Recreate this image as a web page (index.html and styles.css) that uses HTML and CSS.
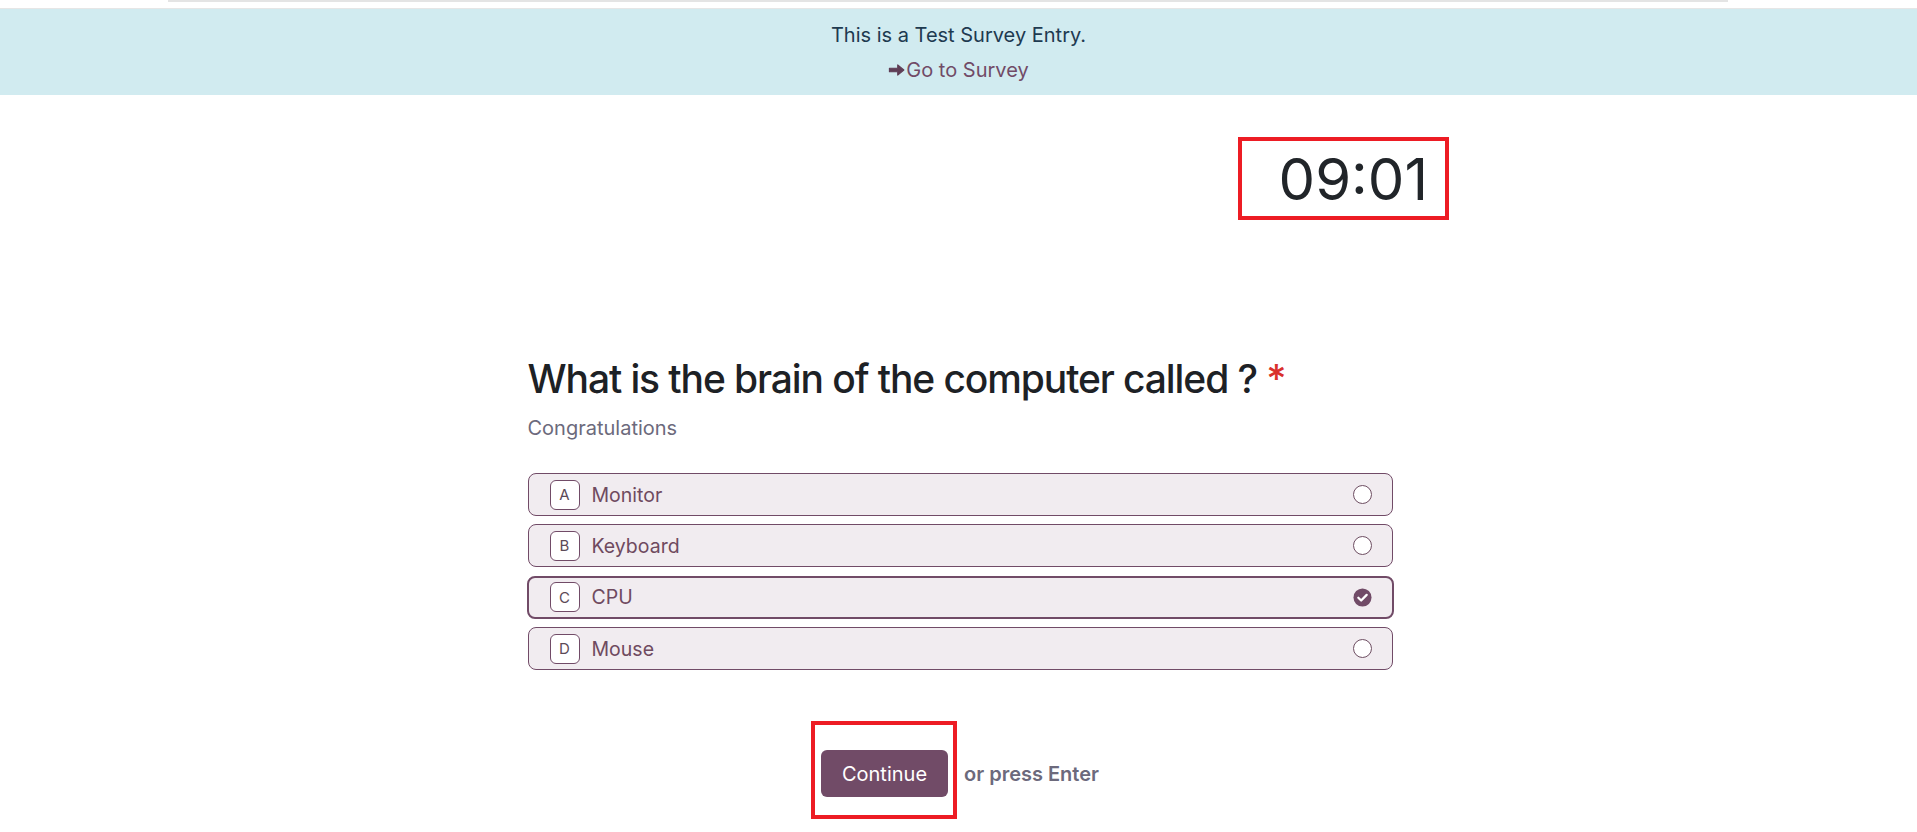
FILE: index.html
```html
<!DOCTYPE html>
<html lang="en">
<head>
  <meta charset="UTF-8" />
  <title>Survey</title>
  <link rel="stylesheet" href="styles.css">
</head>
<body>

  <div class="topline"></div>

  <!-- Test entry banner -->
  <div class="alert">
    <p class="alert-title">This is a Test Survey Entry.</p>
    <a class="alert-link" href="#"><svg class="arrow" viewBox="0 0 18 14" width="17" height="14"><path d="M1.5 5.2h8.8V1.6L16.8 7l-6.5 5.4V8.8H1.5z" fill="currentColor" stroke="currentColor" stroke-width="1.2" stroke-linejoin="round"/></svg>Go to Survey</a>
  </div>

  <!-- Timer -->
  <div class="timer-row">
    <div class="timer">09:01</div>
  </div>

  <!-- Question -->
  <div class="question">
    <h3 class="question-title">What is the brain of the computer called ? <span class="required">*</span></h3>
    <p class="question-desc">Congratulations</p>

    <div class="choices">
      <label class="choice">
        <span class="key">A</span>
        <span class="label">Monitor</span>
        <span class="radio"></span>
      </label>
      <label class="choice">
        <span class="key">B</span>
        <span class="label">Keyboard</span>
        <span class="radio"></span>
      </label>
      <label class="choice selected">
        <span class="key">C</span>
        <span class="label">CPU</span>
        <span class="radio checked"><svg viewBox="0 0 20 20" width="19" height="19"><circle cx="10" cy="10" r="9.5" fill="#714b67"/><path d="M5.6 10.2l3 3 5.8-6" fill="none" stroke="#fff" stroke-width="2.4" stroke-linecap="round" stroke-linejoin="round"/></svg></span>
      </label>
      <label class="choice">
        <span class="key">D</span>
        <span class="label">Mouse</span>
        <span class="radio"></span>
      </label>
    </div>

    <div class="actions">
      <div class="mark">
        <button class="btn-continue">Continue</button>
      </div>
      <span class="hint">or press Enter</span>
    </div>
  </div>

</body>
</html>
```

FILE: styles.css
```css
body {
  margin: 0;
  font-family: Inter, "Noto Sans", sans-serif;
  color: #212529;
  background: #fff;
}
.topline {
  margin-left: 168px;
  width: 1560px;
  height: 2px;
  background: #e4e4e4;
  margin-bottom: 6px;
}
.alert {
  border-top: 1px solid #e6e6e6;
  background: #d1ebf0;
  text-align: center;
  padding: 11px 0 10px;
  font-size: 20px;
}
.alert-title {
  margin: 0 0 5px;
  line-height: 30px;
  color: #1e3a50;
}
.alert-link {
  display: inline-flex;
  align-items: center;
  line-height: 30px;
  color: #714b67;
  text-decoration: none;
}
.arrow {
  color: #5f3e56;
  margin-right: 1px;
}
.timer-row {
  width: 981px;
  margin: 42px auto 0;
  display: flex;
  justify-content: flex-end;
}
.timer {
  box-sizing: border-box;
  width: 211px;
  border: 4px solid #ed1c24;
  padding: 2px 17px 0 0;
  text-align: right;
  font-size: 58px;
  line-height: 73px;
  color: #212529;
}
.question {
  width: 865px;
  margin: 136px auto 0;
  padding-left: 3px;
}
.question-title {
  margin: 0;
  font-size: 39px;
  line-height: 46px;
  font-weight: 500;
  color: #1d2125;
  letter-spacing: -1.1px;
}
.required {
  color: #d9302c;
}
.question-desc {
  margin: 14px 0 0;
  font-size: 20px;
  line-height: 24px;
  color: #6c6a7c;
}
.choices {
  margin-top: 33px;
  display: flex;
  flex-direction: column;
  gap: 8.4px;
}
.choice {
  box-sizing: border-box;
  height: 43px;
  display: flex;
  align-items: center;
  padding: 0 20px 0 21px;
  border: 1px solid #714b67;
  border-radius: 8px;
  background: #f1ecf0;
  color: #6f4a5f;
  font-size: 19.5px;
}
.choice.selected {
  border-width: 2px;
  margin: 0 -1px;
  padding: 0 20px 0 21px;
}
.key {
  box-sizing: border-box;
  width: 30px;
  height: 30px;
  display: flex;
  align-items: center;
  justify-content: center;
  border: 1px solid #714b67;
  border-radius: 6px;
  background: #fff;
  font-size: 15px;
  color: #5c4a57;
  margin-right: 12px;
}
.label {
  flex: 1;
}
.radio {
  box-sizing: border-box;
  width: 19px;
  height: 19px;
  border: 1.5px solid #6e4e62;
  border-radius: 50%;
  background: #fff;
}
.radio.checked {
  border: none;
  background: none;
  display: flex;
}
.actions {
  margin-top: 51px;
  padding-right: 10px;
  display: flex;
  justify-content: center;
  align-items: center;
  gap: 7px;
}
.mark {
  border: 4px solid #ed1c24;
  padding: 25px 5px 18px 6px;
}
.btn-continue {
  display: block;
  width: 127px;
  height: 47px;
  border: none;
  border-radius: 6px;
  background: #714b67;
  color: #fff;
  font-family: inherit;
  font-size: 20px;
}
.hint {
  margin-top: 7px;
  font-size: 20px;
  font-weight: 600;
  color: #6c6a7c;
}
```
